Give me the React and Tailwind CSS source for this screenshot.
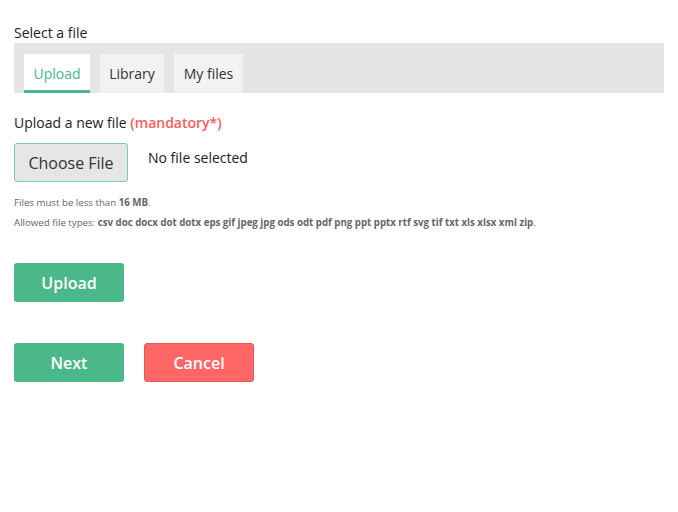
import React, { useState } from 'react';

const tabs = [
  { label: 'Upload', width: 'w-[66px]' },
  { label: 'Library', width: 'w-[64px]' },
  { label: 'My files', width: 'w-[69px]' },
];
const fileTypes = 'csv doc docx dot dotx eps gif jpeg jpg ods odt pdf png ppt pptx rtf svg tif txt xls xlsx xml zip';

const App = () => {
  const [active, setActive] = useState('Upload');

  return (
    <div className="min-h-[512px] bg-white px-[14px] pt-[24px] text-[#222] font-['Open_Sans',sans-serif]">
      <p className="text-[14px] leading-[18px]">Select a file</p>

      <div className="mt-[1px] flex gap-[10px] bg-[#e5e5e5] pl-[10px] pt-[11px]">
        {tabs.map((tab) => (
          <button
            key={tab.label}
            onClick={() => setActive(tab.label)}
            className={`h-[39px] ${tab.width} text-[14px] ${
              active === tab.label
                ? 'bg-white text-[#4bb88a] border-b-[3px] border-[#4bb88a] pt-[3px]'
                : 'bg-[#f2f2f2] text-[#333]'
            }`}
          >
            {tab.label}
          </button>
        ))}
      </div>

      <p className="mt-[21px] text-[14px] leading-[18px]">
        Upload a new file <span className="font-semibold text-[#ff5c5c]">(mandatory*)</span>
      </p>

      <div className="mt-[11px] flex items-start gap-[20px]">
        <button className="h-[39px] w-[114px] rounded-[3px] border border-[#6dcfc1] bg-[#e6e6e6] text-[16px] text-[#333]">
          Choose File
        </button>
        <span className="mt-[4px] text-[14px]">No file selected</span>
      </div>

      <p className="mt-[14px] text-[9.7px] leading-[14px] text-[#666]">
        Files must be less than <b>16 MB</b>.
      </p>
      <p className="mt-[6px] text-[9.7px] leading-[14px] text-[#666]">
        Allowed file types: <b>{fileTypes}</b>.
      </p>

      <button className="mt-[33px] block h-[39px] w-[110px] rounded-[3px] bg-[#4bb88a] text-[16px] font-semibold text-white">
        Upload
      </button>

      <div className="mt-[41px] flex gap-[20px]">
        <button className="h-[39px] w-[110px] rounded-[3px] bg-[#4bb88a] text-[16px] font-semibold text-white">
          Next
        </button>
        <button className="h-[39px] w-[110px] rounded-[3px] border border-[#e85555] bg-[#ff6666] text-[16px] font-semibold text-white">
          Cancel
        </button>
      </div>
    </div>
  );
};

export default App;
